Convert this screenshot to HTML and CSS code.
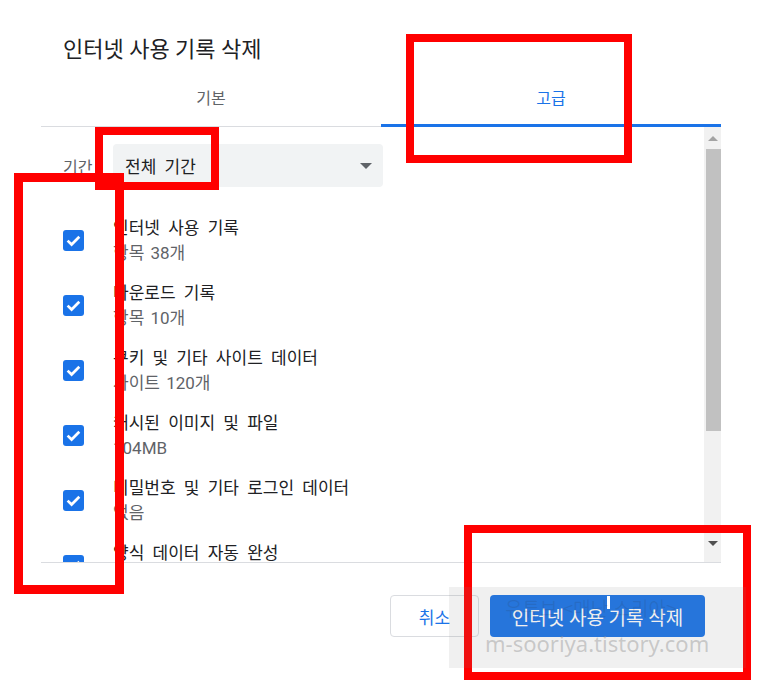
FILE: index.html
```html
<!DOCTYPE html>
<html lang="ko">
<head>
    <meta charset="UTF-8">
    <meta name="viewport" content="width=device-width, initial-scale=1.0">
    <title>인터넷 사용 기록 삭제</title>
    <link rel="stylesheet" href="styles.css">
</head>
<body>
    <div class="dialog">
        <h1 class="title">인터넷 사용 기록 삭제</h1>

        <div class="tabs">
            <div class="tab">기본</div>
            <div class="tab tab-active">고급</div>
        </div>

        <div class="body">
            <div class="scroll-content">
                <div class="period">
                    <span class="period-label">기간</span>
                    <div class="select">
                        <span>전체 기간</span>
                        <span class="select-arrow"></span>
                    </div>
                </div>

                <ul class="items">
                    <li class="item">
                        <span class="checkbox"><svg viewBox="0 0 21 21"><path d="M4.6 10.6l4 3.9 7.7-7.7"/></svg></span>
                        <div class="item-text">
                            <div class="item-name">인터넷 사용 기록</div>
                            <div class="item-desc">항목 38개</div>
                        </div>
                    </li>
                    <li class="item">
                        <span class="checkbox"><svg viewBox="0 0 21 21"><path d="M4.6 10.6l4 3.9 7.7-7.7"/></svg></span>
                        <div class="item-text">
                            <div class="item-name">다운로드 기록</div>
                            <div class="item-desc">항목 10개</div>
                        </div>
                    </li>
                    <li class="item">
                        <span class="checkbox"><svg viewBox="0 0 21 21"><path d="M4.6 10.6l4 3.9 7.7-7.7"/></svg></span>
                        <div class="item-text">
                            <div class="item-name">쿠키 및 기타 사이트 데이터</div>
                            <div class="item-desc">사이트 120개</div>
                        </div>
                    </li>
                    <li class="item">
                        <span class="checkbox"><svg viewBox="0 0 21 21"><path d="M4.6 10.6l4 3.9 7.7-7.7"/></svg></span>
                        <div class="item-text">
                            <div class="item-name">캐시된 이미지 및 파일</div>
                            <div class="item-desc">104MB</div>
                        </div>
                    </li>
                    <li class="item">
                        <span class="checkbox"><svg viewBox="0 0 21 21"><path d="M4.6 10.6l4 3.9 7.7-7.7"/></svg></span>
                        <div class="item-text">
                            <div class="item-name">비밀번호 및 기타 로그인 데이터</div>
                            <div class="item-desc">없음</div>
                        </div>
                    </li>
                    <li class="item">
                        <span class="checkbox"><svg viewBox="0 0 21 21"><path d="M4.6 10.6l4 3.9 7.7-7.7"/></svg></span>
                        <div class="item-text">
                            <div class="item-name">양식 데이터 자동 완성</div>
                            <div class="item-desc">없음</div>
                        </div>
                    </li>
                </ul>
            </div>

            <div class="scrollbar">
                <div class="sb-btn"><span class="sb-arrow-up"></span></div>
                <div class="sb-thumb"></div>
                <div class="sb-btn sb-btn-down"><span class="sb-arrow-down"></span></div>
            </div>
        </div>

        <div class="footer">
            <button class="btn btn-cancel">취소</button>
            <button class="btn btn-primary">인터넷 사용 기록 삭제</button>
        </div>
    </div>

    <!-- annotation boxes drawn over the capture -->
    <div class="mark mark-tab"></div>
    <div class="mark mark-period"></div>
    <div class="mark mark-checks"></div>
    <div class="mark mark-button"></div>

    <div class="watermark">
        <span class="wm-line"></span>
        <div class="wm-top">유튜브 &lt;매난 소리아&gt;</div>
        <div class="wm-url">m-sooriya.tistory.com</div>
    </div>
</body>
</html>
```

FILE: styles.css
```css
* {
    margin: 0;
    padding: 0;
    box-sizing: border-box;
}

body {
    font-family: 'Roboto', 'Noto Sans CJK KR', sans-serif;
    background: #fff;
    color: #202124;
    width: 761px;
    height: 687px;
    overflow: hidden;
    position: relative;
}

.dialog {
    margin-left: 41px;
    width: 680px;
}

.title {
    font-size: 22px;
    font-weight: normal;
    line-height: 30px;
    padding: 35px 22px 0;
    color: #202124;
}

.tabs {
    display: flex;
    margin-top: 7px;
    border-bottom: 1px solid #dadce0;
}

.tab {
    flex: 1;
    text-align: center;
    font-size: 16px;
    line-height: 22px;
    padding: 16px 0;
    color: #5f6368;
}

.tab-active {
    color: #1a73e8;
    box-shadow: 0 1px 0 #1a73e8, inset 0 -2px 0 #1a73e8;
}

.body {
    display: flex;
    height: 436px;
    border-bottom: 1px solid #dadce0;
}

.scroll-content {
    flex: 1;
    overflow: hidden;
    padding-left: 22px;
}

.period {
    display: flex;
    align-items: center;
    margin-top: 17px;
}

.period-label {
    width: 32px;
    margin-right: 18px;
    font-size: 16px;
    color: #5f6368;
}

.select {
    width: 270px;
    height: 43px;
    background: #f1f3f4;
    border-radius: 4px;
    display: flex;
    align-items: center;
    justify-content: space-between;
    padding: 0 11px 0 12px;
    font-size: 17px;
    word-spacing: 4px;
    color: #202124;
}

.select-arrow {
    border-left: 6px solid transparent;
    border-right: 6px solid transparent;
    border-top: 6px solid #5f6368;
}

.items {
    list-style: none;
    margin-top: 21px;
}

.item {
    height: 65px;
    display: flex;
    align-items: center;
}

.checkbox {
    width: 21px;
    height: 21px;
    border-radius: 3px;
    background: #1a73e8;
    display: flex;
}

.checkbox svg {
    width: 21px;
    height: 21px;
    fill: none;
    stroke: #fff;
    stroke-width: 2.7;
}

.item-text {
    margin-left: 29px;
}

.item-name {
    font-size: 17px;
    line-height: 24px;
    word-spacing: 4px;
    color: #202124;
}

.item-desc {
    font-size: 17px;
    line-height: 26px;
    word-spacing: 2px;
    color: #5f6368;
}

.scrollbar {
    width: 17px;
    background: #f1f1f1;
    display: flex;
    flex-direction: column;
}

.sb-btn {
    height: 22px;
    display: flex;
    align-items: center;
    justify-content: center;
}

.sb-btn-down {
    margin-top: auto;
    height: 26px;
    align-items: flex-start;
    padding-top: 5px;
}

.sb-arrow-up {
    border-left: 5px solid transparent;
    border-right: 5px solid transparent;
    border-bottom: 5px solid #a3a3a3;
}

.sb-arrow-down {
    border-left: 5px solid transparent;
    border-right: 5px solid transparent;
    border-top: 5px solid #505050;
}

.sb-thumb {
    height: 282px;
    margin-left: 2px;
    background: #c1c1c1;
}

.footer {
    display: flex;
    justify-content: flex-end;
    gap: 11px;
    padding: 32px 16px 0 0;
}

.btn {
    height: 42px;
    border-radius: 4px;
    font-family: 'Roboto', 'Noto Sans CJK KR', sans-serif;
    font-size: 17px;
    cursor: pointer;
}

.btn-cancel {
    width: 89px;
    background: #fff;
    border: 1px solid #dadce0;
    color: #1a73e8;
}

.btn-primary {
    width: 215px;
    background: #1a73e8;
    border: none;
    color: #fff;
    font-size: 19px;
}

/* red annotation boxes */
.mark {
    position: absolute;
    border: 8px solid #ff0000;
    z-index: 1;
}

.mark-tab {
    left: 406px;
    top: 34px;
    width: 226px;
    height: 129px;
}

.mark-period {
    left: 95px;
    top: 127px;
    width: 124px;
    height: 63px;
}

.mark-checks {
    left: 14px;
    top: 173px;
    width: 110px;
    height: 421px;
    border-width: 9px;
}

.mark-button {
    left: 464px;
    top: 525px;
    width: 287px;
    height: 155px;
}

.watermark {
    position: absolute;
    left: 449px;
    top: 587px;
    width: 297px;
    height: 81px;
    background: rgba(128, 128, 128, 0.12);
    z-index: 2;
}

.wm-line {
    position: absolute;
    left: 158px;
    top: 9px;
    width: 3px;
    height: 13px;
    background: #fff;
}

.wm-top {
    position: absolute;
    left: 56px;
    top: 8px;
    font-family: 'Noto Sans CJK KR', sans-serif;
    font-size: 19px;
    line-height: 26px;
    color: rgba(40, 40, 40, 0.12);
    white-space: nowrap;
}

.wm-url {
    position: absolute;
    left: 36px;
    top: 41px;
    font-family: 'Noto Sans', sans-serif;
    font-size: 22px;
    line-height: 30px;
    color: rgba(150, 150, 150, 0.45);
    white-space: nowrap;
}
```
